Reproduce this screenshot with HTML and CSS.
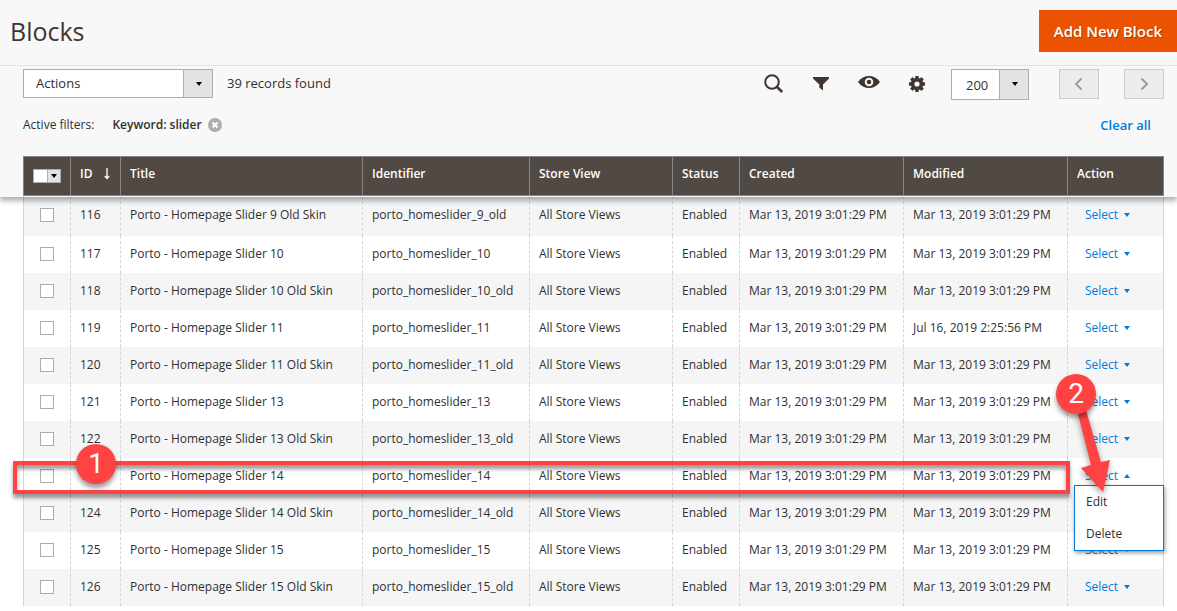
FILE: index.html
```
<!DOCTYPE html>
<html lang="en">
<head>
  <meta charset="utf-8">
  <title>Blocks / Magento Admin</title>
  <meta name="viewport" content="width=device-width, initial-scale=1">
  <link rel="stylesheet" href="styles.css">
</head>
<body>
  <div class="page-top">
    <header class="page-header">
      <h1>Blocks</h1>
      <button type="button" class="btn-primary">Add New Block</button>
    </header>

    <div class="toolbar">
      <div class="select-wrap actions-select">
        <select aria-label="Actions">
          <option>Actions</option>
          <option>Delete</option>
          <option>Disable</option>
          <option>Enable</option>
          <option>Edit</option>
        </select>
      </div>
      <span class="records">39 records found</span>

      <div class="tools">
        <button type="button" class="icon-btn" aria-label="Search">
          <svg width="22" height="22" viewBox="0 0 22 22"><circle cx="10" cy="9" r="6.8" fill="none" stroke="#41362f" stroke-width="2"/><path d="M15 14l5.200 5" stroke="#41362f" stroke-width="2.6" fill="none"/></svg>
        </button>
        <button type="button" class="icon-btn" aria-label="Filters">
          <svg width="22" height="22" viewBox="0 0 22 22"><path d="M3 4h16v1.5L13 11.5v6L9.300 14.500v-3L3 5.500z" fill="#41362f"/></svg>
        </button>
        <button type="button" class="icon-btn" aria-label="Default view">
          <svg width="22" height="22" viewBox="0 0 22 22"><path d="M0 9C3 4.800 6.800 3 11 3s8 1.800 11 6c-3 4.200-6.800 6-11 6S3 13.200 0 9z" fill="#41362f"/><circle cx="11" cy="9" r="3.300" fill="#41362f" stroke="#f8f8f8" stroke-width="2"/></svg>
        </button>
        <button type="button" class="icon-btn" aria-label="Columns">
          <svg width="22" height="22" viewBox="0 0 22 22"><circle cx="11" cy="11" r="4.400" fill="none" stroke="#41362f" stroke-width="3.600"/><path d="M11 3v3M11 16v3M3 11h3M16 11h3M5.300 5.300l2.200 2.200M14.500 14.500l2.200 2.200M5.300 16.700l2.200-2.200M14.500 7.500l2.200-2.200" stroke="#41362f" stroke-width="3.400"/></svg>
        </button>
      </div>

      <div class="select-wrap size-select">
        <select aria-label="Records per page">
          <option>200</option>
          <option>100</option>
          <option>50</option>
        </select>
      </div>
      <div class="pager">
        <button type="button" disabled aria-label="Previous page">
          <svg width="10" height="14" viewBox="0 0 10 14"><path d="M7.500 1.500L2 7l5.500 5.500" fill="none" stroke="#999" stroke-width="1.800"/></svg>
        </button>
        <button type="button" disabled aria-label="Next page">
          <svg width="10" height="14" viewBox="0 0 10 14"><path d="M2.500 1.500L8 7l-5.500 5.500" fill="none" stroke="#999" stroke-width="1.800"/></svg>
        </button>
      </div>
    </div>

    <div class="filters">
      <span class="filters-label">Active filters:</span>
      <strong>Keyword: slider</strong>
      <button type="button" class="remove-filter" aria-label="Remove filter">
        <svg width="14" height="14" viewBox="0 0 14 14"><circle cx="7" cy="7" r="7" fill="#adadad"/><path d="M4.500 4.500l5 5M9.500 4.500l-5 5" stroke="#fff" stroke-width="2"/></svg>
      </button>
      <a href="#" class="clear-all">Clear all</a>
    </div>
  </div>

  <div class="grid-wrap">
    <table class="data-grid">
      <colgroup>
        <col class="col-check"><col class="col-id"><col><col class="col-identifier"><col class="col-store">
        <col class="col-status"><col class="col-date"><col class="col-date"><col class="col-action">
      </colgroup>
      <thead>
        <tr>
          <th><button type="button" class="multiselect" aria-label="Select rows"></button></th>
          <th>ID <svg class="sort" width="6" height="12" viewBox="0 0 6 12"><path d="M3 0v10M.8 8L3 10.500 5.200 8" fill="none" stroke="#fff" stroke-width="1.300"/></svg></th>
          <th>Title</th>
          <th>Identifier</th>
          <th>Store View</th>
          <th>Status</th>
          <th>Created</th>
          <th>Modified</th>
          <th>Action</th>
        </tr>
      </thead>
      <tbody>
        <tr>
          <td><input type="checkbox" aria-label="Select 116"></td>
          <td>116</td>
          <td>Porto - Homepage Slider 9 Old Skin</td>
          <td>porto_homeslider_9_old</td>
          <td>All Store Views</td>
          <td>Enabled</td>
          <td>Mar 13, 2019 3:01:29 PM</td>
          <td>Mar 13, 2019 3:01:29 PM</td>
          <td><button type="button" class="select-link">Select</button></td>
        </tr>
        <tr>
          <td><input type="checkbox" aria-label="Select 117"></td>
          <td>117</td>
          <td>Porto - Homepage Slider 10</td>
          <td>porto_homeslider_10</td>
          <td>All Store Views</td>
          <td>Enabled</td>
          <td>Mar 13, 2019 3:01:29 PM</td>
          <td>Mar 13, 2019 3:01:29 PM</td>
          <td><button type="button" class="select-link">Select</button></td>
        </tr>
        <tr>
          <td><input type="checkbox" aria-label="Select 118"></td>
          <td>118</td>
          <td>Porto - Homepage Slider 10 Old Skin</td>
          <td>porto_homeslider_10_old</td>
          <td>All Store Views</td>
          <td>Enabled</td>
          <td>Mar 13, 2019 3:01:29 PM</td>
          <td>Mar 13, 2019 3:01:29 PM</td>
          <td><button type="button" class="select-link">Select</button></td>
        </tr>
        <tr>
          <td><input type="checkbox" aria-label="Select 119"></td>
          <td>119</td>
          <td>Porto - Homepage Slider 11</td>
          <td>porto_homeslider_11</td>
          <td>All Store Views</td>
          <td>Enabled</td>
          <td>Mar 13, 2019 3:01:29 PM</td>
          <td>Jul 16, 2019 2:25:56 PM</td>
          <td><button type="button" class="select-link">Select</button></td>
        </tr>
        <tr>
          <td><input type="checkbox" aria-label="Select 120"></td>
          <td>120</td>
          <td>Porto - Homepage Slider 11 Old Skin</td>
          <td>porto_homeslider_11_old</td>
          <td>All Store Views</td>
          <td>Enabled</td>
          <td>Mar 13, 2019 3:01:29 PM</td>
          <td>Mar 13, 2019 3:01:29 PM</td>
          <td><button type="button" class="select-link">Select</button></td>
        </tr>
        <tr>
          <td><input type="checkbox" aria-label="Select 121"></td>
          <td>121</td>
          <td>Porto - Homepage Slider 13</td>
          <td>porto_homeslider_13</td>
          <td>All Store Views</td>
          <td>Enabled</td>
          <td>Mar 13, 2019 3:01:29 PM</td>
          <td>Mar 13, 2019 3:01:29 PM</td>
          <td><button type="button" class="select-link">Select</button></td>
        </tr>
        <tr>
          <td><input type="checkbox" aria-label="Select 122"></td>
          <td>122</td>
          <td>Porto - Homepage Slider 13 Old Skin</td>
          <td>porto_homeslider_13_old</td>
          <td>All Store Views</td>
          <td>Enabled</td>
          <td>Mar 13, 2019 3:01:29 PM</td>
          <td>Mar 13, 2019 3:01:29 PM</td>
          <td><button type="button" class="select-link">Select</button></td>
        </tr>
        <tr class="current">
          <td><input type="checkbox" aria-label="Select 123"></td>
          <td>123</td>
          <td>Porto - Homepage Slider 14</td>
          <td>porto_homeslider_14</td>
          <td>All Store Views</td>
          <td>Enabled</td>
          <td>Mar 13, 2019 3:01:29 PM</td>
          <td>Mar 13, 2019 3:01:29 PM</td>
          <td>
            <button type="button" class="select-link open">Select</button>
            <ul class="action-menu">
              <li><a href="#">Edit</a></li>
              <li><a href="#">Delete</a></li>
            </ul>
            <div class="highlight"></div>
            <span class="step step-one">1</span>
            <svg class="arrow" width="40" height="90" viewBox="0 0 40 90"><path d="M1 0L10 0 25 52 34 50 27 82 5 58 15 55z" fill="#ff4343"/></svg>
            <span class="step step-two">2</span>
          </td>
        </tr>
        <tr>
          <td><input type="checkbox" aria-label="Select 124"></td>
          <td>124</td>
          <td>Porto - Homepage Slider 14 Old Skin</td>
          <td>porto_homeslider_14_old</td>
          <td>All Store Views</td>
          <td>Enabled</td>
          <td>Mar 13, 2019 3:01:29 PM</td>
          <td>Mar 13, 2019 3:01:29 PM</td>
          <td><button type="button" class="select-link">Select</button></td>
        </tr>
        <tr>
          <td><input type="checkbox" aria-label="Select 125"></td>
          <td>125</td>
          <td>Porto - Homepage Slider 15</td>
          <td>porto_homeslider_15</td>
          <td>All Store Views</td>
          <td>Enabled</td>
          <td>Mar 13, 2019 3:01:29 PM</td>
          <td>Mar 13, 2019 3:01:29 PM</td>
          <td><button type="button" class="select-link">Select</button></td>
        </tr>
        <tr>
          <td><input type="checkbox" aria-label="Select 126"></td>
          <td>126</td>
          <td>Porto - Homepage Slider 15 Old Skin</td>
          <td>porto_homeslider_15_old</td>
          <td>All Store Views</td>
          <td>Enabled</td>
          <td>Mar 13, 2019 3:01:29 PM</td>
          <td>Mar 13, 2019 3:01:29 PM</td>
          <td><button type="button" class="select-link">Select</button></td>
        </tr>
      </tbody>
    </table>
  </div>
</body>
</html>
```
FILE: styles.css
```
* {
  box-sizing: border-box;
}

body {
  margin: 0;
  background-color: #fff;
  color: #303030;
  font-family: "Open Sans", Arial, sans-serif;
  font-size: 13px;
  line-height: 18px;
}

button,
select {
  font-family: inherit;
  font-size: inherit;
  line-height: inherit;
}

button {
  border: none;
  padding: 0;
  background: none;
  cursor: pointer;
}

svg {
  display: block;
}

a {
  color: #007bdb;
  text-decoration: none;
}

/* top panel, runs on behind the table head */
.page-top {
  position: relative;
  z-index: 1;
  padding-bottom: 41px;
  margin-bottom: -41px;
  background-color: #f8f8f8;
  box-shadow: 0 4px 5px rgba(0, 0, 0, 0.3);
}

.page-header {
  display: flex;
  justify-content: space-between;
  align-items: center;
  height: 66px;
  padding: 0 0 4px 10px;
  border-bottom: 1px solid #e3e3e3;
}

.page-header h1 {
  margin: 0;
  color: #41362f;
  font-size: 25px;
  font-weight: 400;
  line-height: 36px;
}

.btn-primary {
  height: 42px;
  padding: 0 15px;
  background-color: #eb5202;
  color: #fff;
  font-size: 15px;
  font-weight: 600;
  text-shadow: 1px 1px 0 rgba(0, 0, 0, 0.25);
}

.toolbar {
  display: flex;
  align-items: flex-start;
  padding: 3px 13px 0 23px;
}

.select-wrap {
  position: relative;
}

.select-wrap select {
  width: 100%;
  height: 100%;
  margin: 0;
  padding: 0 12px 2px;
  border: 1px solid #adadad;
  border-radius: 0;
  background-color: #fff;
  color: #303030;
  appearance: none;
}

.select-wrap::before {
  content: "";
  position: absolute;
  top: 1px;
  right: 1px;
  bottom: 1px;
  width: 28px;
  border-left: 1px solid #adadad;
  background-color: #e3e3e3;
  pointer-events: none;
}

.select-wrap::after {
  content: "";
  position: absolute;
  top: 13px;
  right: 11px;
  border: 3px solid transparent;
  border-top: 4px solid #000;
  border-bottom: none;
  pointer-events: none;
}

.actions-select {
  width: 190px;
  height: 29px;
}

.records {
  margin-left: 14px;
  line-height: 29px;
}

.tools {
  display: flex;
  gap: 26px;
  margin-left: auto;
  padding-top: 4px;
}

.size-select {
  width: 78px;
  height: 31px;
  margin-left: 23px;
}

.size-select select {
  padding: 0 14px;
}

.pager {
  display: flex;
  gap: 25px;
  margin-left: 30px;
}

.pager button {
  display: flex;
  align-items: center;
  justify-content: center;
  width: 40px;
  height: 30px;
  border: 1px solid #ccc;
  background-color: #ececec;
}

.filters {
  display: flex;
  align-items: center;
  padding: 16px 26px 22px 23px;
}

.filters-label {
  margin-right: 18px;
  font-size: 12px;
}

.filters strong {
  font-size: 12px;
  font-weight: 600;
}

.remove-filter {
  margin-left: 6px;
}

.clear-all {
  margin-left: auto;
  font-weight: 600;
}

.grid-wrap {
  padding: 0 13px 0 23px;
}

.data-grid {
  width: 100%;
  table-layout: fixed;
  border-collapse: separate;
  border-spacing: 0;
  font-size: 12px;
}

.col-check { width: 47px; }
.col-id { width: 50px; }
.col-identifier { width: 167px; }
.col-store { width: 143px; }
.col-status { width: 67px; }
.col-date { width: 164px; }
.col-action { width: 97px; }

.data-grid thead {
  position: relative;
  z-index: 2;
}

.data-grid th {
  height: 40px;
  padding: 0 9px 4px;
  border: 1px solid #8a837f;
  border-right: none;
  background-color: #514943;
  color: #fff;
  font-weight: 600;
  text-align: left;
}

.data-grid th:last-child {
  border-right: 1px solid #8a837f;
}

.multiselect {
  display: block;
  position: relative;
  width: 28px;
  height: 14px;
  margin-top: 4px;
  border: 1px solid #adadad;
  background: linear-gradient(to right, #fff 13px, #adadad 13px, #adadad 14px, #e3e3e3 14px);
}

.multiselect::after {
  content: "";
  position: absolute;
  top: 4px;
  right: 3px;
  border: 3px solid transparent;
  border-top: 4px solid #000;
  border-bottom: none;
}

.sort {
  display: inline-block;
  margin-left: 8px;
  vertical-align: -2px;
}

.data-grid td {
  height: 37px;
  padding: 0 9px 2px;
  border-left: 1px dashed #d6d6d6;
  white-space: nowrap;
}

.data-grid td:first-child {
  padding-left: 16px;
  border-left: 1px solid #d6d6d6;
}

.data-grid td:last-child {
  padding-left: 17px;
  border-right: 1px solid #d6d6d6;
}

.data-grid tbody tr:first-child td {
  height: 40px;
}

.data-grid tbody tr:nth-child(odd) {
  background-color: #f5f5f5;
}

.data-grid input {
  display: block;
  width: 14px;
  height: 14px;
  margin: 0;
  border: 1px solid #adadad;
  background-color: #fff;
  appearance: none;
}

.select-link {
  display: flex;
  align-items: center;
  color: #007bdb;
}

.select-link::after {
  content: "";
  margin-left: 6px;
  border: 3px solid transparent;
  border-top: 4px solid #007bdb;
  border-bottom: none;
}

.select-link.open::after {
  border-top: none;
  border-bottom: 4px solid #007bdb;
}

.current {
  position: relative;
}

.action-menu {
  position: absolute;
  top: 27px;
  right: 0;
  width: 90px;
  margin: 0;
  padding: 0;
  border: 1px solid #007bdb;
  background-color: #fff;
  box-shadow: 1px 2px 4px rgba(0, 0, 0, 0.4);
  list-style: none;
}

.action-menu a {
  display: block;
  padding: 7px 11px;
  color: #303030;
}

/* walkthrough marks */
.highlight {
  position: absolute;
  top: 3px;
  left: -10px;
  right: 94px;
  height: 33px;
  border: 4px solid #ff4343;
  box-shadow: 0 4px 4px rgba(0, 0, 0, 0.4), inset 0 4px 4px rgba(0, 0, 0, 0.4);
  pointer-events: none;
}

.step {
  position: absolute;
  width: 40px;
  height: 40px;
  border-radius: 50%;
  background-color: #ff4343;
  box-shadow: 0 4px 5px rgba(0, 0, 0, 0.4);
  color: #fff;
  font-family: Roboto, Arial, sans-serif;
  font-size: 28px;
  line-height: 40px;
  text-align: center;
}

.step-one {
  top: -14px;
  left: 53px;
}

.step-two {
  top: -84px;
  right: 68px;
}

.arrow {
  position: absolute;
  top: -48px;
  right: 48px;
  filter: drop-shadow(0 3px 3px rgba(0, 0, 0, 0.4));
}
```
